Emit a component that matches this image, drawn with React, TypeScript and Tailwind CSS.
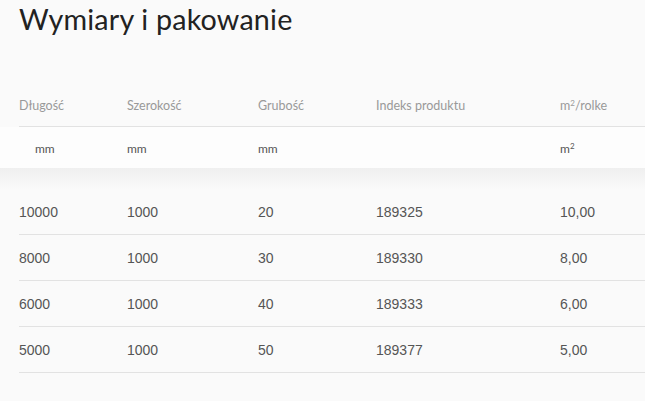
import React from 'react'

const rows = [
  ['10000', '1000', '20', '189325', '10,00'],
  ['8000', '1000', '30', '189330', '8,00'],
  ['6000', '1000', '40', '189333', '6,00'],
  ['5000', '1000', '50', '189377', '5,00'],
]

const cols = 'grid grid-cols-[108px_131px_118px_184px_1fr]'

export default function App() {
  return (
    <div className="w-[645px] h-[401px] overflow-hidden bg-[#fafafa] text-[#555]">
      <h1 className="pl-[19px] pt-[3px] text-[28.7px] leading-[32px] text-[#222] font-['Lato',sans-serif] tracking-[0.2px]">
        Wymiary i pakowanie
      </h1>

      <div className="pl-[19px] mt-[55px]">
        <div className={`${cols} h-[37px] pt-[7px] border-b border-[#e2e2e2] text-[12.5px] text-[#999] font-['Lato',sans-serif]`}>
          <div>Długość</div>
          <div>Szerokość</div>
          <div>Grubość</div>
          <div>Indeks produktu</div>
          <div>
            m<sup className="text-[8px]">2</sup>/rolke
          </div>
        </div>
      </div>

      <div className="pl-[19px] bg-[#fdfdfd]">
        <div className={`${cols} h-[41px] pt-[3px] items-center text-[12px] text-[#555] font-['Lato',sans-serif]`}>
          <div className="pl-[16px]">mm</div>
          <div>mm</div>
          <div>mm</div>
          <div></div>
          <div>
            m<sup className="text-[8px]">2</sup>
          </div>
        </div>
      </div>
      <div className="h-[21px] bg-gradient-to-b from-[#efefef] to-[#fafafa]" />

      <div className="pl-[19px] font-['Liberation_Sans',sans-serif] text-[14px] text-[#555]">
        {rows.map((r) => (
          <div key={r[0]} className={`${cols} h-[46px] pt-[2px] items-center border-b border-[#e2e2e2]`}>
            {r.map((c, i) => (
              <div key={i}>{c}</div>
            ))}
          </div>
        ))}
      </div>
    </div>
  )
}
